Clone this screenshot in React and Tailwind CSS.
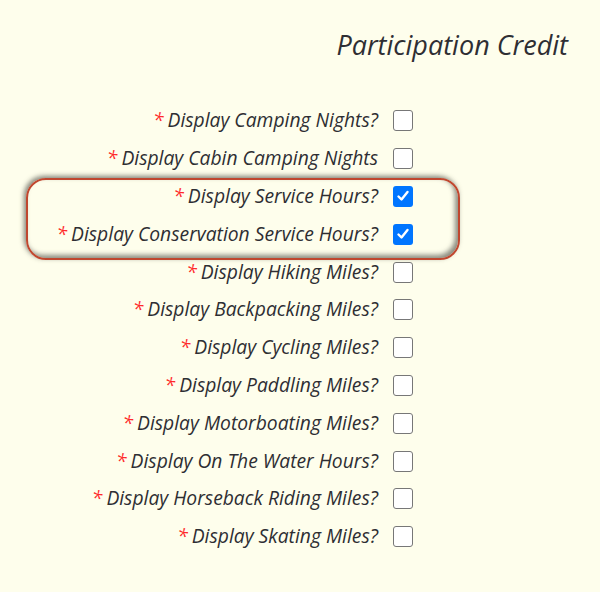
import React from "react";

const rows = [
  ["Display Camping Nights?", false],
  ["Display Cabin Camping Nights", false],
  ["Display Service Hours?", true],
  ["Display Conservation Service Hours?", true],
  ["Display Hiking Miles?", false],
  ["Display Backpacking Miles?", false],
  ["Display Cycling Miles?", false],
  ["Display Paddling Miles?", false],
  ["Display Motorboating Miles?", false],
  ["Display On The Water Hours?", false],
  ["Display Horseback Riding Miles?", false],
  ["Display Skating Miles?", false],
];

function Box({ checked }) {
  if (checked) {
    return (
      <div className="w-[20px] h-[21px] rounded-[3px] bg-[#0075ff] flex items-center justify-center">
        <svg width="14" height="14" viewBox="0 0 14 14">
          <path d="M2.5 7.5 L5.5 10.5 L11.5 3" fill="none" stroke="white" strokeWidth="2.4" strokeLinecap="round" strokeLinejoin="round" />
        </svg>
      </div>
    );
  }
  return <div className="w-[20px] h-[21px] rounded-[3px] border-[1.5px] border-[#777] bg-white" />;
}

function Row({ label, checked }) {
  return (
    <div className="h-[37.8px] flex items-center">
      <div className="w-[378px] text-right text-[19.3px] italic text-[#2e2e33] whitespace-nowrap">
        <span className="text-[#ff2a2a] mr-[4px]">*</span>
        {label}
      </div>
      <div className="ml-[15px]">
        <Box checked={checked} />
      </div>
    </div>
  );
}

export default function App() {
  return (
    <div className="w-[600px] h-[592px] bg-[#fefeec] overflow-hidden" style={{ fontFamily: '"Open Sans", "Noto Sans", sans-serif' }}>
      <div className="pt-[26px] pr-[32px] text-right text-[27px] italic text-[#2e2e33] leading-[38px]">Participation Credit</div>
      <div className="mt-[38px] flex flex-col">
        {rows.slice(0, 2).map(([l, c]) => (
          <Row key={l} label={l} checked={c} />
        ))}
        <div className="relative">
          {rows.slice(2, 4).map(([l, c]) => (
            <Row key={l} label={l} checked={c} />
          ))}
          <div className="absolute left-[26px] top-[0px] w-[434px] h-[82px] rounded-[20px] border-[2.5px] border-[#c0472f] shadow-[-2px_-2px_5px_rgba(110,110,100,0.85),inset_-3px_-3px_5px_rgba(110,110,100,0.8)] pointer-events-none" />
        </div>
        {rows.slice(4).map(([l, c]) => (
          <Row key={l} label={l} checked={c} />
        ))}
      </div>
    </div>
  );
}
